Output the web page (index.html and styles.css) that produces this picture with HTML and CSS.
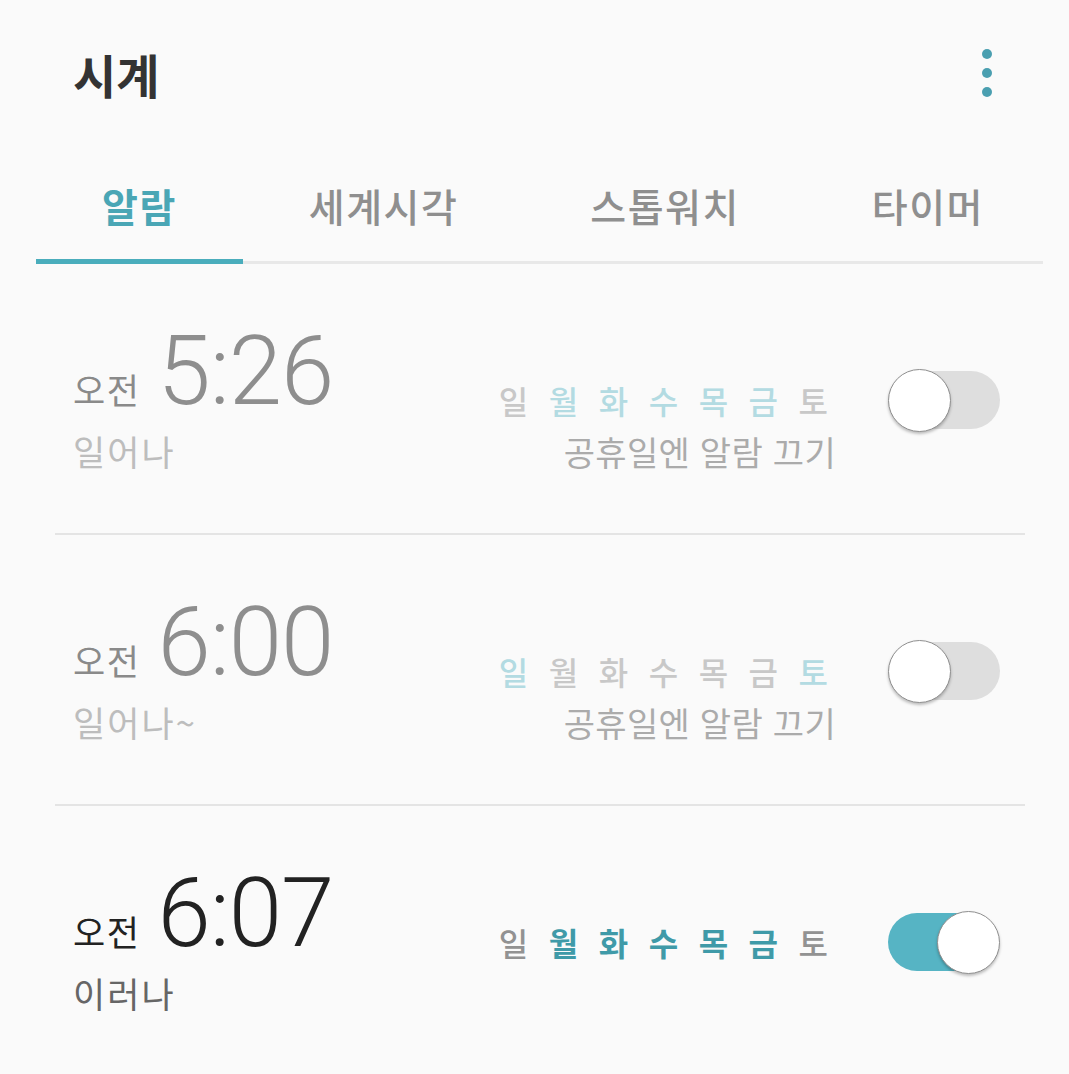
FILE: index.html
```html
<!DOCTYPE html>
<html lang="ko">
<head>
<meta charset="utf-8">
<title>시계</title>
<link rel="stylesheet" href="styles.css">
</head>
<body>
<div class="app">
  <header class="appbar">
    <h1 class="title">시계</h1>
    <button class="more" aria-label="더보기"><span></span><span></span><span></span></button>
  </header>
  <nav class="tabs">
    <div class="tab active">알람</div>
    <div class="tab">세계시각</div>
    <div class="tab">스톱워치</div>
    <div class="tab">타이머</div>
  </nav>
  <ul class="alarms">
    <li class="alarm off">
      <div class="info">
        <div class="timeline"><span class="ampm">오전</span><span class="time">5:26</span></div>
        <div class="label">일어나</div>
      </div>
      <div class="side">
        <div class="days"><span>일</span><span class="on">월</span><span class="on">화</span><span class="on">수</span><span class="on">목</span><span class="on">금</span><span>토</span></div>
        <div class="toggle"><span class="knob"></span></div>
        <div class="holiday">공휴일엔 알람 끄기</div>
      </div>
    </li>
    <li class="alarm off">
      <div class="info">
        <div class="timeline"><span class="ampm">오전</span><span class="time">6:00</span></div>
        <div class="label">일어나~</div>
      </div>
      <div class="side">
        <div class="days"><span class="on">일</span><span>월</span><span>화</span><span>수</span><span>목</span><span>금</span><span class="on">토</span></div>
        <div class="toggle"><span class="knob"></span></div>
        <div class="holiday">공휴일엔 알람 끄기</div>
      </div>
    </li>
    <li class="alarm active">
      <div class="info">
        <div class="timeline"><span class="ampm">오전</span><span class="time">6:07</span></div>
        <div class="label">이러나</div>
      </div>
      <div class="side">
        <div class="days"><span>일</span><span class="on">월</span><span class="on">화</span><span class="on">수</span><span class="on">목</span><span class="on">금</span><span>토</span></div>
        <div class="toggle checked"><span class="knob"></span></div>
      </div>
    </li>
  </ul>
</div>
</body>
</html>
```
FILE: styles.css
```css
* { box-sizing: border-box; }
html, body { margin: 0; padding: 0; }
body {
  background: #fafafa;
  font-family: "Noto Sans CJK KR", "Noto Sans", sans-serif;
  color: #333;
}
.app { width: 1069px; height: 1074px; overflow: hidden; }

.appbar {
  height: 146px;
  display: flex;
  align-items: center;
  justify-content: space-between;
  padding: 0 67px 0 73px;
}
.title {
  margin: 0;
  font-size: 47px;
  font-weight: 700;
  color: #333;
  line-height: 1;
  letter-spacing: 0;
}
.more {
  border: 0;
  background: none;
  padding: 0;
  width: 30px;
  display: flex;
  flex-direction: column;
  align-items: center;
  gap: 9px;
}
.more span {
  width: 10px;
  height: 10px;
  border-radius: 50%;
  background: #4a9fb0;
}

.tabs {
  display: flex;
  margin: 0 26px 0 36px;
  border-bottom: 3px solid #e8e8e8;
}
.tab {
  padding: 37px 66px 32px;
  font-size: 39px;
  line-height: 44px;
  font-weight: 500;
  color: #8f8f8f;
  border-bottom: 5px solid transparent;
  margin-bottom: -3px;
  white-space: nowrap;
  letter-spacing: 1.5px;
}
.tab.active {
  color: #4aa6b5;
  font-weight: 700;
  border-bottom-color: #4aadbc;
}

.alarms {
  list-style: none;
  margin: 0 44px 0 55px;
  padding: 0;
}
.alarm {
  height: 271px;
  border-bottom: 2px solid #e4e4e4;
  display: flex;
  justify-content: space-between;
  align-items: flex-start;
  padding: 59px 25px 0 18px;
}
.info { display: flex; flex-direction: column; }
.timeline {
  display: flex;
  align-items: baseline;
  gap: 17px;
}
.ampm {
  font-size: 35px;
  line-height: 1;
  letter-spacing: 1.5px;
}
.time {
  font-family: Roboto, "Liberation Sans", sans-serif;
  font-weight: 300;
  font-size: 96px;
  line-height: 1;
  letter-spacing: -1px;
}
.label {
  font-size: 35px;
  line-height: 40px;
  margin-top: 12px;
  letter-spacing: 2px;
}

.side {
  display: grid;
  grid-template-columns: auto auto;
  column-gap: 58px;
  align-items: center;
  margin-top: 45px;
}
.days {
  display: flex;
  justify-content: flex-end;
  gap: 20.5px;
  font-size: 32px;
  font-weight: 500;
  line-height: 64px;
  margin-right: 2px;
}
.holiday {
  grid-column: 1;
  text-align: right;
  font-size: 34px;
  line-height: 40px;
  color: #ababab;
  margin-top: 0;
  letter-spacing: 0.3px;
  margin-right: -6px;
}

.toggle {
  position: relative;
  width: 112px;
  height: 64px;
  display: flex;
  align-items: center;
}
.toggle::before {
  content: "";
  display: block;
  width: 100px;
  height: 58px;
  margin-left: 12px;
  border-radius: 29px;
  background: #dedede;
}
.toggle .knob {
  position: absolute;
  left: 0;
  top: 1px;
  width: 63px;
  height: 63px;
  border-radius: 50%;
  background: #fff;
  border: 1px solid #8f8f8f;
  box-shadow: 0 2px 3px rgba(0,0,0,0.25);
}
.toggle.checked::before {
  width: 100px;
  margin-left: 0;
  background: #56b4c4;
}
.toggle.checked .knob { left: auto; right: 0; }

.alarm.off .ampm { color: #8a8a8a; }
.alarm.off .time { color: #8e8e8e; }
.alarm.off .label { color: #bdbdbd; }
.alarm.off .days span { color: #c8c8c8; }
.alarm.off .days span.on { color: #b3dbe2; }

.alarm.active .ampm { color: #222; }
.alarm.active .time { color: #222; }
.alarm.active .label { color: #666; }
.alarm.active .days span { color: #929292; }
.alarm.active .days span.on { color: #3f9aa8; font-weight: 700; }
```
